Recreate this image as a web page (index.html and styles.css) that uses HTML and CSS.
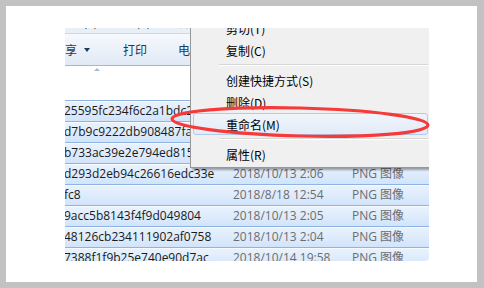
FILE: index.html
```html
<!DOCTYPE html>
<html>
  <head>
    <title>重命名</title>
    <link rel="stylesheet" href="styles.css">
  </head>
  <body>
    <div class="frame">
      <div class="shot">
        <!-- cut-off menu bar line -->
        <div class="menubar">
          <span>件(F)</span><span>编辑(E)</span><span>查看(V)</span><span>工具(T)</span>
        </div>

        <!-- command bar -->
        <div class="toolbar">
          <span class="tb-item">享<i class="caret"></i></span>
          <span class="tb-item">打印</span>
          <span class="tb-item">电子邮件</span>
        </div>

        <!-- file list -->
        <div class="list">
          <div class="list-head"><i class="sort"></i></div>
          <div class="row"><span class="name">25595fc234f6c2a1bdc2e9a1</span><span class="date">2018/10/13 2:06</span><span class="type">PNG 图像</span></div>
          <div class="row"><span class="name">d7b9c9222db908487fa0e2c4</span><span class="date">2018/10/13 2:06</span><span class="type">PNG 图像</span></div>
          <div class="row"><span class="name">b733ac39e2e794ed815c0d7e</span><span class="date">2018/10/13 2:06</span><span class="type">PNG 图像</span></div>
          <div class="row"><span class="name">d293d2eb94c26616edc33e</span><span class="date">2018/10/13 2:06</span><span class="type">PNG 图像</span></div>
          <div class="row"><span class="name">fc8</span><span class="date">2018/8/18 12:54</span><span class="type">PNG 图像</span></div>
          <div class="row"><span class="name">9acc5b8143f4f9d049804</span><span class="date">2018/10/13 2:05</span><span class="type">PNG 图像</span></div>
          <div class="row"><span class="name">48126cb234111902af0758</span><span class="date">2018/10/13 2:04</span><span class="type">PNG 图像</span></div>
          <div class="row"><span class="name">7388f1f9b25e740e90d7ac</span><span class="date">2018/10/14 19:58</span><span class="type">PNG 图像</span></div>
        </div>

        <!-- context menu -->
        <ul class="menu">
          <li>剪切(T)</li>
          <li>复制(C)</li>
          <li class="sep"></li>
          <li>创建快捷方式(S)</li>
          <li>删除(D)</li>
          <li class="hover">重命名(M)</li>
          <li class="sep"></li>
          <li>属性(R)</li>
        </ul>
      </div>

      <!-- red annotation ring -->
      <svg class="mark" width="471" height="276" viewBox="0 0 471 276">
        <ellipse cx="294" cy="116" rx="128" ry="14" transform="rotate(1.4 294 116)" fill="none" stroke="#f63a3a" stroke-width="3.2"/>
      </svg>
    </div>
  </body>
</html>
```

FILE: styles.css
```css
body {
  margin: 0;
  background: #c2c2c2;
  padding: 6px 7px 6px 6px;
  font-family: "Open Sans", "Noto Sans CJK SC", sans-serif;
  font-size: 12px;
}

.frame {
  position: relative;
  width: 471px;
  height: 276px;
  background: #fff;
  padding: 22px 0 0 59px;
  box-sizing: border-box;
}

.shot {
  position: relative;
  width: 364px;
  height: 233px;
  overflow: hidden;
  border-bottom-right-radius: 4px;
}

/* menu bar, only the bottom of its glyphs shows */
.menubar {
  height: 5px;
  overflow: hidden;
  background: #e9eff7;
  border-bottom: 1px solid #cdd7e4;
  display: flex;
  gap: 14px;
  color: #1e1e1e;
  font-family: "Noto Sans CJK SC", sans-serif;
  line-height: 5px;
  padding-left: 6px;
}
.menubar span {
  margin-top: -9px;
}

.toolbar {
  height: 31px;
  display: flex;
  align-items: center;
  background: linear-gradient(to bottom, #f6f9fd, #e0e9f5);
  border-bottom: 1px solid #a9b7c9;
  color: #1e395b;
  font-family: "Noto Sans CJK SC", sans-serif;
}
.tb-item {
  display: flex;
  align-items: center;
  margin-right: 31px;
}
.tb-item:first-child {
  margin-right: 33px;
}
.caret {
  margin-left: 7px;
  border-top: 4px solid #1e395b;
  border-left: 3px solid transparent;
  border-right: 3px solid transparent;
}

.list-head {
  height: 34px;
  position: relative;
}
.sort {
  position: absolute;
  left: 29px;
  top: 2px;
  border-bottom: 3px solid #a7bcd4;
  border-left: 3px solid transparent;
  border-right: 3px solid transparent;
}

.row {
  display: grid;
  grid-template-columns: 168px 119px 1fr;
  height: 20px;
  line-height: 20px;
  border-top: 1px solid #8db4e4;
  background: linear-gradient(to bottom, #eaf3fd, #d2e4fb);
  box-shadow: inset 0 1px #f6faff;
  white-space: nowrap;
  overflow: hidden;
}
.name {
  color: #1a1a1a;
  margin-left: -1px;
}
.date,
.type {
  color: #6d6d6d;
}

.menu {
  position: absolute;
  left: 125px;
  top: -14px;
  width: 235px;
  margin: 0;
  padding: 2px;
  list-style: none;
  background: #f0f0f0;
  border: 1px solid #979797;
  box-shadow: 2px 2px 2px rgba(0, 0, 0, 0.35);
  font-family: "Noto Sans CJK SC", sans-serif;
  color: #000;
}
.menu li {
  height: 22px;
  line-height: 21px;
  padding-left: 32px;
  border: 1px solid transparent;
  box-sizing: border-box;
}
.menu li.sep {
  height: 8px;
  padding: 0;
  border: 0;
  margin-left: 26px;
  position: relative;
}
.menu li.sep::after {
  content: "";
  position: absolute;
  left: 0;
  right: 0;
  top: 3px;
  border-top: 1px solid #d7d7d7;
  border-bottom: 1px solid #fff;
}
.menu li.hover {
  border-color: #aeccf1;
  border-radius: 3px;
  background: linear-gradient(to bottom, #f0f5fb, #e2ebf7);
}

.mark {
  position: absolute;
  left: 0;
  top: 0;
}
```
